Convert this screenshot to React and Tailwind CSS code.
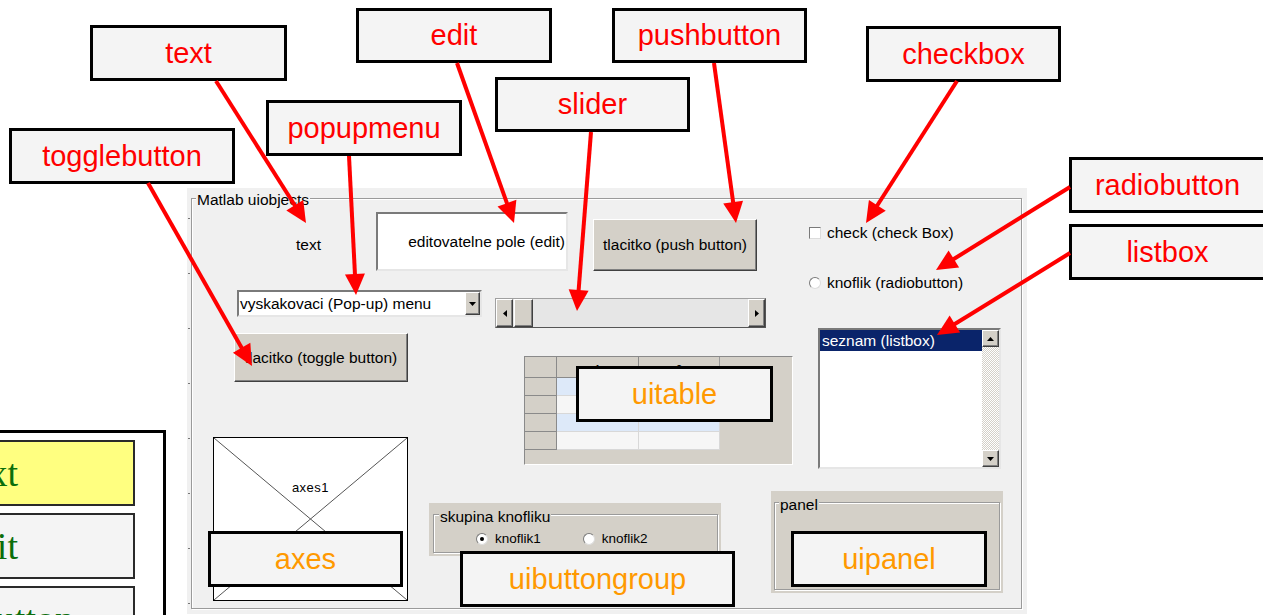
import React from 'react';

// 3D okraje ve stylu Windows classic
const RAISED =
  'bg-[#d4d0c8] border border-t-white border-l-white border-r-[#404040] border-b-[#404040] shadow-[inset_-1px_-1px_0_#808080]';
const SUNKEN =
  'border-2 border-t-[#7a7a7a] border-l-[#7a7a7a] border-r-[#e6e6e6] border-b-[#e6e6e6]';
const ETCHED = 'border border-[#9a9a9a] shadow-[inset_1px_1px_0_#fff,1px_1px_0_#fff]';

const arrows = [
  [148, 183, 252, 366], // togglebutton
  [216, 81, 306, 223], // text
  [349, 156, 356, 295], // popupmenu
  [457, 63, 514, 223], // edit
  [591, 132, 577, 311], // slider
  [714, 63, 736, 223], // pushbutton
  [957, 81, 866, 223], // checkbox
  [1070, 187, 936, 270], // radiobutton
  [1070, 253, 937, 335], // listbox
];

const Arrow = ({ x1, y1, x2, y2 }) => {
  const len = Math.hypot(x2 - x1, y2 - y1);
  const ux = (x2 - x1) / len;
  const uy = (y2 - y1) / len;
  const hl = 21;
  const hw = 10;
  const bx = x2 - ux * hl;
  const by = y2 - uy * hl;
  const pts = [
    [x2, y2],
    [bx - uy * hw, by + ux * hw],
    [bx + uy * hw, by - ux * hw],
  ]
    .map((p) => p.join(','))
    .join(' ');
  return (
    <g>
      <line x1={x1} y1={y1} x2={bx + ux * 2} y2={by + uy * 2} stroke="#ff0000" strokeWidth="4" />
      <polygon points={pts} fill="#ff0000" />
    </g>
  );
};

const Tri = ({ dir }) => {
  const horiz = dir === 'left' || dir === 'right';
  const w = horiz ? 4 : 7;
  const h = horiz ? 7 : 4;
  const pts = {
    left: '4,0 0,3.5 4,7',
    right: '0,0 4,3.5 0,7',
    up: '0,4 3.5,0 7,4',
    down: '0,0 7,0 3.5,4',
  }[dir];
  return (
    <svg width={w} height={h} viewBox={`0 0 ${w} ${h}`}>
      <polygon points={pts} fill="#000" />
    </svg>
  );
};

const Callout = ({ className, children }) => (
  <div
    className={`absolute flex items-center justify-center whitespace-nowrap border-[3px] border-black bg-[#f4f4f4] text-[29px] leading-none ${className}`}
  >
    {children}
  </div>
);

const Radio = ({ checked }) => (
  <span className="flex h-[12px] w-[12px] items-center justify-center rounded-full border border-t-[#7a7a7a] border-l-[#7a7a7a] border-r-[#dcdcdc] border-b-[#dcdcdc] bg-white">
    {checked && <span className="h-[4px] w-[4px] rounded-full bg-black" />}
  </span>
);

const rowColors = ['bg-[#dde9f9]', 'bg-[#f6f6f6]', 'bg-[#dde9f9]', 'bg-[#f6f6f6]'];

const App = () => {
  return (
    <div className="relative h-[615px] w-[1263px] overflow-hidden bg-white font-['Liberation_Sans',Arial,sans-serif]">
      {/* levy dolni vyrez jine stranky */}
      <div className="absolute -left-[10px] top-[430px] flex h-[200px] w-[176px] flex-col gap-[7px] border-[3px] border-black bg-white pt-[7px]">
        <div className="-ml-[149px] flex h-[66px] w-[291px] shrink-0 items-center justify-center border-2 border-[#2a2a2a] bg-[#ffff80] font-['Liberation_Serif',serif] text-[38px] leading-none text-[#0b6e0b]">
          text
        </div>
        <div className="-ml-[149px] flex h-[66px] w-[291px] shrink-0 items-center justify-center border-2 border-[#2a2a2a] bg-[#f4f4f4] font-['Liberation_Serif',serif] text-[38px] leading-none text-[#0b6e0b]">
          edit
        </div>
        <div className="-ml-[149px] flex h-[66px] w-[291px] shrink-0 items-center justify-center border-2 border-[#2a2a2a] bg-[#f4f4f4] font-['Liberation_Serif',serif] text-[38px] leading-none text-[#0b6e0b]">
          pushbutton
        </div>
      </div>

      {/* okno GUIDE */}
      <div className="absolute left-[187px] top-[188px] h-[426px] w-[840px] bg-[#f0f0f0] text-[15.5px] leading-4 text-black">
        <div className="absolute left-px top-[30px] flex flex-col gap-[54px]">
          {Array.from({ length: 8 }).map((_, i) => (
            <span key={i} className="h-px w-[2px] bg-[#777]" />
          ))}
        </div>
        <div className={`absolute left-[4px] top-[10px] h-[411px] w-[831px] ${ETCHED}`} />
        <span className="absolute left-[9px] top-[4px] bg-[#f0f0f0] px-px">Matlab uiobjects</span>

        {/* text */}
        <span className="absolute left-[109px] top-[49px]">text</span>

        {/* edit */}
        <div className={`absolute left-[189px] top-[24px] flex h-[59px] w-[192px] items-center justify-end whitespace-nowrap bg-white pr-px ${SUNKEN}`}>
          editovatelne pole (edit)
        </div>

        {/* push button */}
        <div className={`absolute left-[406px] top-[31px] flex h-[52px] w-[164px] items-center justify-center whitespace-nowrap ${RAISED}`}>
          tlacitko (push button)
        </div>

        {/* checkbox a radiobutton */}
        <div className="absolute left-[622px] top-[37px] flex flex-col gap-[34px] whitespace-nowrap">
          <div className="flex h-[16px] items-center gap-[6px]">
            <span className="h-[12px] w-[12px] border border-t-[#7a7a7a] border-l-[#7a7a7a] border-r-[#dcdcdc] border-b-[#dcdcdc] bg-white" />
            check (check Box)
          </div>
          <div className="flex h-[16px] items-center gap-[6px]">
            <Radio />
            knoflik (radiobutton)
          </div>
        </div>

        {/* popup menu */}
        <div className={`absolute left-[50px] top-[102px] flex h-[27px] w-[245px] items-center justify-between bg-white pl-[1px] ${SUNKEN}`}>
          <span className="whitespace-nowrap">vyskakovaci (Pop-up) menu</span>
          <span className={`flex h-full w-[15px] items-center justify-center ${RAISED}`}>
            <Tri dir="down" />
          </span>
        </div>

        {/* slider */}
        <div className="absolute left-[308px] top-[110px] flex h-[30px] w-[271px] border border-t-[#a0a0a0] border-l-[#a0a0a0] border-r-[#555] border-b-[#555] bg-[#e6e6e6]">
          <div className={`flex w-[17px] items-center justify-center ${RAISED}`}>
            <Tri dir="left" />
          </div>
          <div className={`ml-px w-[19px] ${RAISED}`} />
          <div className="flex-1" />
          <div className={`flex w-[17px] items-center justify-center ${RAISED}`}>
            <Tri dir="right" />
          </div>
        </div>

        {/* toggle button */}
        <div className={`absolute left-[47px] top-[145px] flex h-[49px] w-[174px] items-center justify-center whitespace-nowrap ${RAISED}`}>
          tlacitko (toggle button)
        </div>

        {/* uitable */}
        <div className="absolute left-[337px] top-[168px] h-[109px] w-[269px] border border-t-[#8a8a8a] border-l-[#8a8a8a] border-r-white border-b-white bg-[#d4d0c8]">
          <div className="flex h-[21px]">
            <div className="w-[32px] border-r border-b border-[#8a8a8a]" />
            <div className="w-[82px] overflow-hidden border-r border-b border-[#8a8a8a] text-center text-[12px] leading-[27px]">1</div>
            <div className="w-[81px] overflow-hidden border-r border-b border-[#9a9a9a] text-center text-[12px] leading-[27px]">2</div>
          </div>
          {rowColors.map((c, i) => (
            <div key={i} className="flex h-[18px]">
              <div className="w-[32px] border-r border-b border-[#8a8a8a]" />
              <div className={`w-[82px] border-r border-b border-[#d8d8d8] ${c}`} />
              <div className={`w-[81px] border-r border-b border-[#d8d8d8] ${c}`} />
            </div>
          ))}
        </div>

        {/* listbox */}
        <div className={`absolute left-[631px] top-[140px] flex h-[141px] w-[183px] bg-white ${SUNKEN}`}>
          <div className="flex-1">
            <div className="h-[21px] whitespace-nowrap bg-[#0a246a] pl-[2px] leading-[21px] text-white">seznam (listbox)</div>
          </div>
          <div className="flex w-[17px] flex-col bg-[image:repeating-conic-gradient(#d4d0c8_0%_25%,#ffffff_0%_50%)] bg-[length:2px_2px]">
            <div className={`flex h-[17px] items-center justify-center ${RAISED}`}>
              <Tri dir="up" />
            </div>
            <div className="flex-1" />
            <div className={`flex h-[17px] items-center justify-center ${RAISED}`}>
              <Tri dir="down" />
            </div>
          </div>
        </div>

        {/* axes */}
        <div className="absolute left-[26px] top-[249px] flex h-[164px] w-[195px] justify-center border border-black bg-white pt-[42px]">
          <svg className="absolute inset-0 h-full w-full" viewBox="0 0 193 162" preserveAspectRatio="none">
            <line x1="0" y1="0" x2="193" y2="162" stroke="#555" strokeWidth="1" />
            <line x1="193" y1="0" x2="0" y2="162" stroke="#555" strokeWidth="1" />
          </svg>
          <span className="relative text-[13px] tracking-[0.5px]">axes1</span>
        </div>

        {/* button group */}
        <div className="absolute left-[242px] top-[315px] h-[53px] w-[292px] bg-[#d4d0c8]">
          <div className={`absolute left-[4px] top-[11px] h-[39px] w-[285px] ${ETCHED}`} />
          <span className="absolute left-[10px] top-[6px] bg-[#d4d0c8] px-px">skupina knofliku</span>
          <div className="absolute left-[47px] top-[28px] flex gap-[42px] text-[13.5px]">
            <div className="flex h-[16px] items-center gap-[7px]">
              <Radio checked />
              knoflik1
            </div>
            <div className="flex h-[16px] items-center gap-[7px]">
              <Radio />
              knoflik2
            </div>
          </div>
        </div>

        {/* panel */}
        <div className="absolute left-[584px] top-[303px] h-[102px] w-[232px] bg-[#d4d0c8]">
          <div className={`absolute left-[3px] top-[11px] h-[88px] w-[226px] ${ETCHED}`} />
          <span className="absolute left-[8px] top-[6px] bg-[#d4d0c8] px-px">panel</span>
        </div>
      </div>

      {/* popisky */}
      <Callout className="left-[90px] top-[25px] h-[56px] w-[197px] text-[#ff0000]">text</Callout>
      <Callout className="left-[356px] top-[8px] h-[55px] w-[196px] text-[#ff0000]">edit</Callout>
      <Callout className="left-[612px] top-[8px] h-[55px] w-[195px] text-[#ff0000]">pushbutton</Callout>
      <Callout className="left-[866px] top-[26px] h-[56px] w-[195px] text-[#ff0000]">checkbox</Callout>
      <Callout className="left-[495px] top-[77px] h-[55px] w-[195px] text-[#ff0000]">slider</Callout>
      <Callout className="left-[266px] top-[100px] h-[56px] w-[196px] text-[#ff0000]">popupmenu</Callout>
      <Callout className="left-[9px] top-[128px] h-[56px] w-[226px] text-[#ff0000]">togglebutton</Callout>
      <Callout className="left-[1069px] top-[157px] h-[56px] w-[197px] text-[#ff0000]">radiobutton</Callout>
      <Callout className="left-[1069px] top-[224px] h-[56px] w-[197px] text-[#ff0000]">listbox</Callout>

      <Callout className="left-[576px] top-[366px] h-[56px] w-[197px] text-[#ff9900]">uitable</Callout>
      <Callout className="left-[208px] top-[531px] h-[56px] w-[195px] text-[#ff9900]">axes</Callout>
      <Callout className="left-[460px] top-[551px] h-[56px] w-[275px] text-[#ff9900]">uibuttongroup</Callout>
      <Callout className="left-[791px] top-[531px] h-[56px] w-[196px] text-[#ff9900]">uipanel</Callout>

      {/* sipky */}
      <svg className="pointer-events-none absolute inset-0" width="1263" height="615">
        {arrows.map(([x1, y1, x2, y2], i) => (
          <Arrow key={i} x1={x1} y1={y1} x2={x2} y2={y2} />
        ))}
      </svg>
    </div>
  );
};

export default App;
